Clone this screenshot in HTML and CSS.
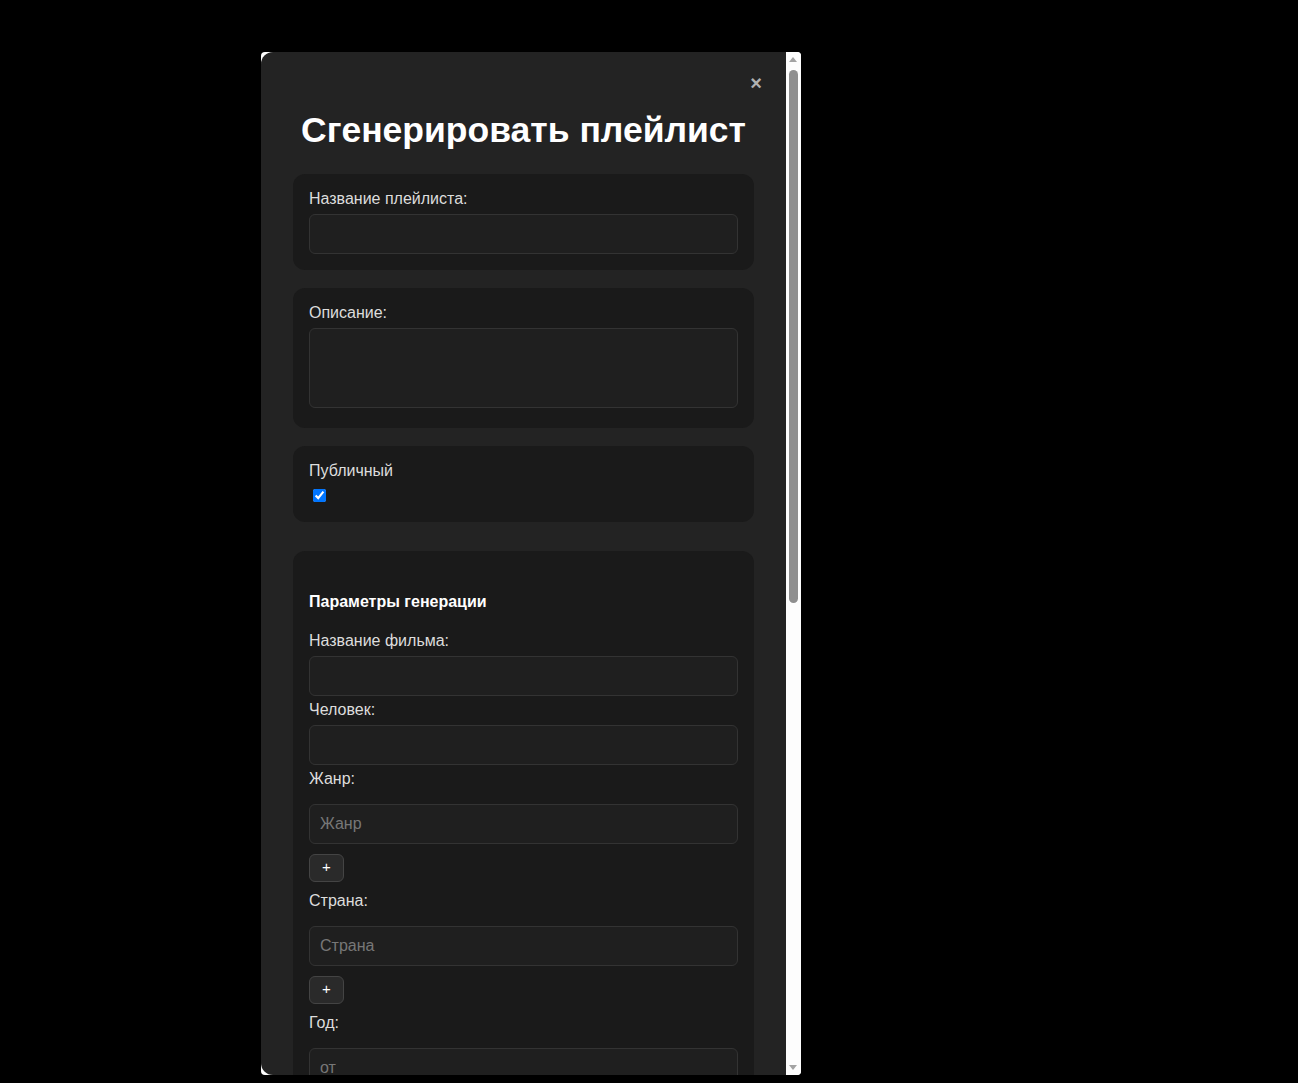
FILE: index.html
```html
<!DOCTYPE html>
<html lang="ru">
<head>
<meta charset="utf-8">
<title>Сгенерировать плейлист</title>
<link rel="stylesheet" href="styles.css">
</head>
<body>
<div class="stage">
  <div class="frame">
    <div class="modal">
      <button class="close" type="button">×</button>
      <h1 class="title">Сгенерировать плейлист</h1>

      <div class="card">
        <label class="label">Название плейлиста:</label>
        <input class="field" type="text">
      </div>

      <div class="card">
        <label class="label">Описание:</label>
        <textarea class="area"></textarea>
      </div>

      <div class="card">
        <label class="label">Публичный</label>
        <input class="check" type="checkbox" checked>
      </div>

      <div class="card card-params">
        <h4 class="params-title">Параметры генерации</h4>

        <label class="label">Название фильма:</label>
        <input class="field field-simple" type="text">

        <label class="label">Человек:</label>
        <input class="field field-simple" type="text">

        <label class="label">Жанр:</label>
        <div class="list">
          <input class="field field-item" type="text" placeholder="Жанр">
          <button class="add" type="button">+</button>
        </div>

        <label class="label">Страна:</label>
        <div class="list">
          <input class="field field-item" type="text" placeholder="Страна">
          <button class="add" type="button">+</button>
        </div>

        <label class="label">Год:</label>
        <div class="list">
          <input class="field field-item" type="text" placeholder="от">
          <input class="field field-item" type="text" placeholder="до">
        </div>

        <label class="label">Рейтинг:</label>
        <div class="list">
          <input class="field field-item" type="text" placeholder="от">
          <input class="field field-item" type="text" placeholder="до">
        </div>

        <label class="label">Количество треков:</label>
        <input class="field field-simple" type="text" placeholder="20">
      </div>

      <button class="submit" type="button">Сгенерировать</button>
    </div>

    <div class="scrollbar" aria-hidden="true">
      <div class="sb-arrow sb-up"></div>
      <div class="sb-track">
        <div class="sb-thumb"></div>
      </div>
      <div class="sb-arrow sb-down"></div>
    </div>
  </div>
</div>
</body>
</html>
```

FILE: styles.css
```css
html, body {
  margin: 0;
  padding: 0;
  background: #000;
  font-family: "Liberation Sans", Arial, sans-serif;
}

.stage {
  padding: 52px 0 0 261px;
}

.frame {
  display: flex;
  width: 540px;
  height: 1023px;
  background: #fdfdfd;
  border-radius: 4px;
  overflow: hidden;
}

.modal {
  position: relative;
  flex: 1;
  min-width: 0;
  box-sizing: border-box;
  height: 100%;
  background: #232323;
  border-radius: 12px 0 0 12px;
  overflow: hidden;
  padding: 32px 32px 32px 32px;
}

/* scrollbar column */
.scrollbar {
  display: flex;
  flex-direction: column;
  width: 15px;
  flex: 0 0 15px;
  background: #fdfdfd;
}
.sb-arrow {
  position: relative;
  height: 15px;
  flex: 0 0 15px;
}
.sb-up::after,
.sb-down::after {
  content: "";
  position: absolute;
  left: 3px;
  width: 0;
  height: 0;
  border-left: 4.5px solid transparent;
  border-right: 4.5px solid transparent;
}
.sb-up::after {
  top: 5px;
  border-bottom: 5px solid #a3a3a3;
}
.sb-down::after {
  top: 5px;
  border-top: 5px solid #a3a3a3;
}
.sb-track {
  flex: 1;
  padding-top: 3px;
}
.sb-thumb {
  width: 9px;
  height: 533px;
  margin-left: 3px;
  background: #8f8f8f;
  border-radius: 5px;
}

.close {
  position: absolute;
  top: 19px;
  right: 18px;
  width: 24px;
  height: 24px;
  padding: 0;
  border: 0;
  background: transparent;
  color: #b0b0b0;
  font-family: "Liberation Sans", Arial, sans-serif;
  font-size: 20px;
  font-weight: bold;
  line-height: 24px;
  cursor: pointer;
}

.title {
  margin: 26px 0 23px;
  text-align: center;
  color: #fff;
  font-size: 35.5px;
  font-weight: bold;
  white-space: nowrap;
}

.card {
  background: #1a1a1a;
  border-radius: 12px;
  padding: 16px;
  margin-bottom: 18px;
}

.card-params {
  margin-top: 29px;
}

.label {
  display: block;
  color: #ddd;
  font-size: 16px;
  margin-bottom: 6px;
}

.field {
  display: block;
  box-sizing: border-box;
  width: 100%;
  height: 40px;
  margin: 0;
  padding: 0 10px;
  background: #1f1f1f;
  border: 1px solid #333;
  border-radius: 6px;
  color: #ddd;
  font-family: "Liberation Sans", Arial, sans-serif;
  font-size: 16px;
  outline: none;
}
.field::placeholder {
  color: #777;
}

.field-simple {
  margin-bottom: 5px;
}

.area {
  box-sizing: border-box;
  width: 100%;
  height: 80px;
  margin: 0;
  padding: 10px;
  background: #1f1f1f;
  border: 1px solid #333;
  border-radius: 6px;
  color: #ddd;
  font-family: "Liberation Sans", Arial, sans-serif;
  font-size: 16px;
  resize: none;
  outline: none;
}

.check {
  margin: 3px 3px 3px 4px;
}

.params-title {
  margin: 26px 0 21px;
  color: #fff;
  font-size: 16px;
  font-weight: bold;
}

.list {
  padding-top: 10px;
  margin-bottom: 10px;
}

.field-item {
  margin-bottom: 10px;
}

.add {
  display: block;
  box-sizing: border-box;
  width: 35px;
  height: 28px;
  padding: 0 0 3px;
  background: #2a2a2a;
  border: 1px solid #444;
  border-radius: 6px;
  color: #fff;
  font-family: "Liberation Sans", Arial, sans-serif;
  font-size: 15px;
  cursor: pointer;
}

.submit {
  display: block;
  box-sizing: border-box;
  width: 100%;
  height: 44px;
  margin-top: 24px;
  background: #1db954;
  border: 0;
  border-radius: 22px;
  color: #fff;
  font-family: "Liberation Sans", Arial, sans-serif;
  font-size: 16px;
  font-weight: bold;
}
```
